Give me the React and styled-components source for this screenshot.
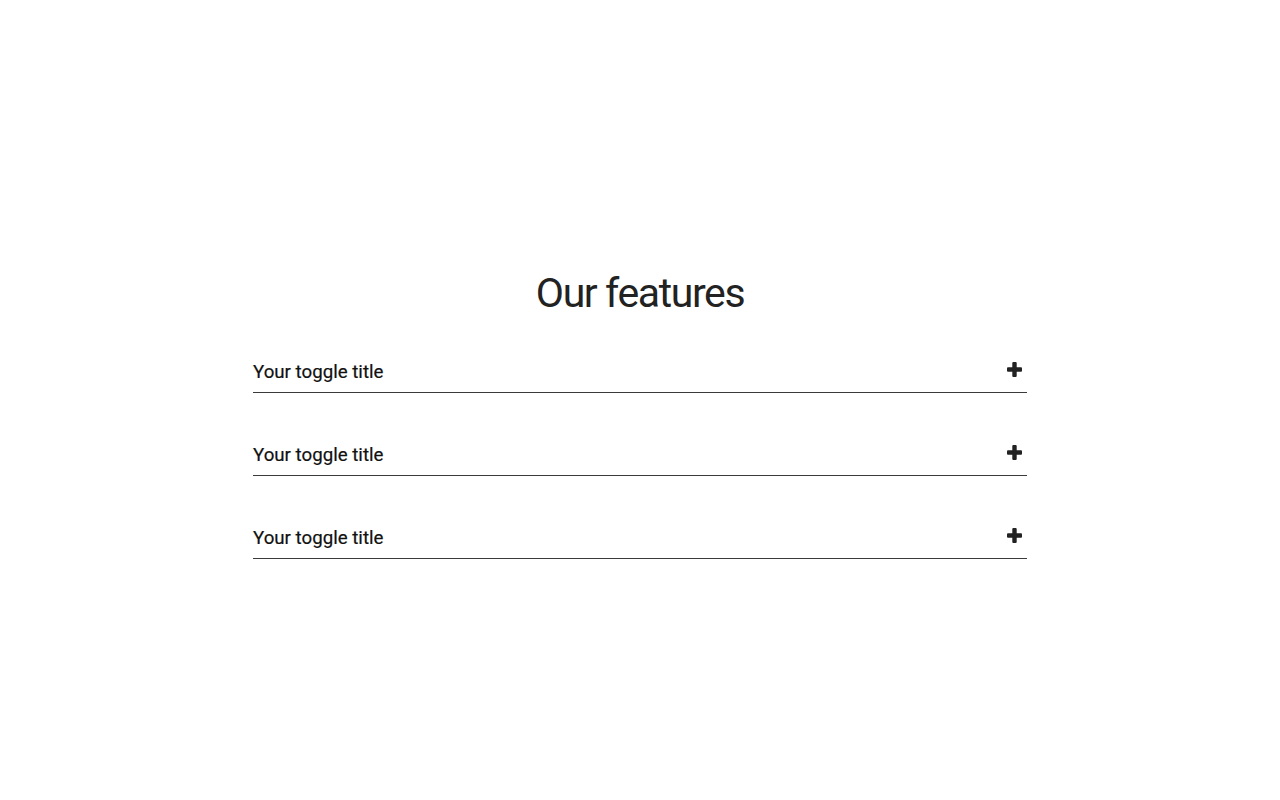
import React from "react";
import styled, { createGlobalStyle } from "styled-components";

const GlobalStyle = createGlobalStyle`
  body {
    margin: 0;
    background: #ffffff;
    font-family: Roboto, "Liberation Sans", Arial, sans-serif;
    color: #222222;
  }
`;

const toggles = ["Your toggle title", "Your toggle title", "Your toggle title"];

const PlusIcon = () => (
  <svg width="15" height="15" viewBox="0 0 15 15" fill="currentColor">
    <rect x="0" y="5.3" width="15" height="4.4" rx="1" />
    <rect x="5.3" y="0" width="4.4" height="15" rx="1" />
  </svg>
);

const App = () => {
  return (
    <>
      <GlobalStyle />
      <Wrapper>
        <Heading>Our features</Heading>
        <List>
          {toggles.map((title, i) => (
            <Toggle key={i}>
              <ToggleTitle>{title}</ToggleTitle>
              <Icon>
                <PlusIcon />
              </Icon>
            </Toggle>
          ))}
        </List>
      </Wrapper>
    </>
  );
};

const Wrapper = styled.div`
  display: flex;
  flex-direction: column;
  align-items: center;
  padding-top: 268px;
  min-height: 800px;
  box-sizing: border-box;
`;

const Heading = styled.h1`
  margin: 0;
  font-size: 41px;
  font-weight: 400;
  line-height: 50px;
  letter-spacing: -1.4px;
  color: #222222;
`;

const List = styled.div`
  display: flex;
  flex-direction: column;
  gap: 51px;
  width: 774px;
  margin-top: 43px;
`;

const Toggle = styled.div`
  display: flex;
  justify-content: space-between;
  align-items: flex-end;
  padding-bottom: 9px;
  border-bottom: 1px solid #3a3a3a;
  cursor: pointer;
`;

const ToggleTitle = styled.span`
  font-size: 18.7px;
  font-weight: 400;
  line-height: 22px;
  color: #111111;
  -webkit-text-stroke: 0.2px #111111;
`;

const Icon = styled.span`
  display: flex;
  color: #222222;
  margin-right: 5px;
  margin-bottom: 6px;
`;

export default App;
